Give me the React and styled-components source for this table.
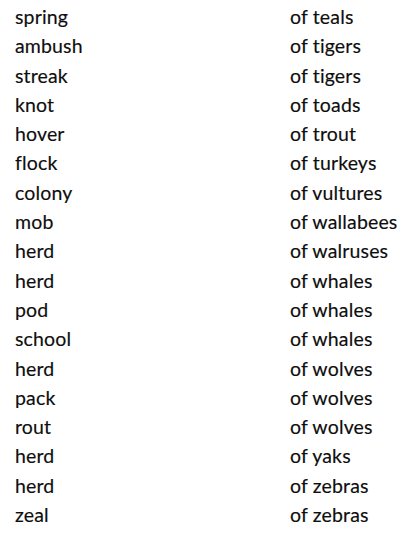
import React from "react";
import styled, {createGlobalStyle} from "styled-components";

const GlobalStyle = createGlobalStyle`
    html, body {
        margin: 0;
        padding: 0;
        background: #ffffff;
    }
`;

const Page = styled.div`
    width: 402px;
    height: 538px;
    padding: 2px 0 0 15px;
    box-sizing: border-box;
    background: #ffffff;
    overflow: hidden;
`;

const Table = styled.div`
    display: grid;
    grid-template-columns: 275px auto;
    grid-auto-rows: 29.3px;
    font-family: Lato, "Liberation Sans", sans-serif;
    font-size: 19.5px;
    letter-spacing: 0.15px;
    line-height: 29.3px;
    font-variant-ligatures: none;
    color: #0e0e0e;
    -webkit-text-stroke: 0.15px #0e0e0e;
`;

const Cell = styled.div`
    white-space: nowrap;
`;

const rows = [
    ["spring", "of teals"],
    ["ambush", "of tigers"],
    ["streak", "of tigers"],
    ["knot", "of toads"],
    ["hover", "of trout"],
    ["flock", "of turkeys"],
    ["colony", "of vultures"],
    ["mob", "of wallabees"],
    ["herd", "of walruses"],
    ["herd", "of whales"],
    ["pod", "of whales"],
    ["school", "of whales"],
    ["herd", "of wolves"],
    ["pack", "of wolves"],
    ["rout", "of wolves"],
    ["herd", "of yaks"],
    ["herd", "of zebras"],
    ["zeal", "of zebras"],
];

export default function App() {
    return (
        <Page>
            <GlobalStyle/>
            <Table>
                {rows.map(([group, animal], i) => (
                    <React.Fragment key={i}>
                        <Cell>{group}</Cell>
                        <Cell>{animal}</Cell>
                    </React.Fragment>
                ))}
            </Table>
        </Page>
    );
}
